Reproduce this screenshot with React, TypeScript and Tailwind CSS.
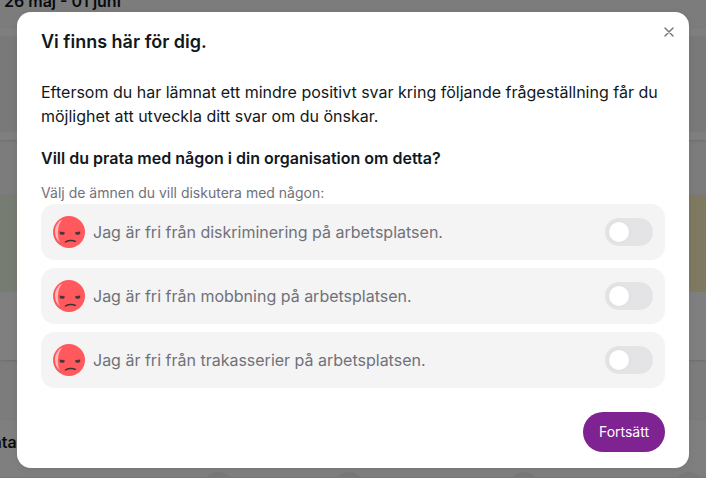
import { useState } from "react";

const topics = [
  "Jag är fri från diskriminering på arbetsplatsen.",
  "Jag är fri från mobbning på arbetsplatsen.",
  "Jag är fri från trakasserier på arbetsplatsen.",
];

const AngryFace: React.FC = () => (
  <svg width="32" height="32" viewBox="0 0 32 32" fill="none" className="shrink-0">
    <circle cx="16" cy="16" r="16" fill="#ff595e" />
    <path
      d="M9.200 3.600C4.900 5.900 2.100 10.400 2 15.800C2 20 3.700 23.800 6.800 26.200C5.200 22.400 4.500 18.500 5 14.200C5.400 10.200 6.800 6.700 9.200 3.600Z"
      fill="#ffb8ba"
    />
    <path
      d="M6.900 15.700Q9 16.500 11.400 16.300L11.200 17.900Q9 18.900 7.200 17.900ZM27 15.700Q24.900 16.500 22.500 16.300L22.700 17.900Q24.900 18.900 26.700 17.900Z"
      fill="#33363b"
      stroke="#33363b"
      strokeWidth="0.400"
    />
    <path
      d="M12.500 26C14.800 24.100 19.600 23.900 22.400 25.300"
      stroke="#33363b"
      strokeWidth="1.500"
      strokeLinecap="round"
    />
  </svg>
);

const Toggle: React.FC<{ label: string }> = ({ label }) => {
  const [on, setOn] = useState(false);

  return (
    <button
      role="switch"
      aria-checked={on}
      aria-label={label}
      onClick={() => setOn(!on)}
      className={`flex h-7 w-12 shrink-0 items-center rounded-full px-1 ${
        on ? "justify-end bg-[#7e2391]" : "justify-start bg-[#e4e4e7]"
      }`}
    >
      <span className="size-5 rounded-full bg-white shadow-[0_0_5px_rgba(0,0,0,0.04)]" />
    </button>
  );
};

const Backdrop: React.FC = () => (
  <div className="flex h-full flex-col bg-[#f8f8f8] text-base font-semibold text-[#11181c]">
    <div className="h-7 shrink-0 pl-1">
      <div className="-mt-[11px] leading-6">26 maj - 01 juni</div>
    </div>
    <div className="h-28 shrink-0 bg-white py-2 shadow-sm">
      <div className="h-24 bg-[#f3f3f3]" />
    </div>
    <div className="mt-[55px] flex h-[165px] shrink-0 flex-col bg-white shadow-sm">
      <div className="flex h-[97px] justify-between">
        <div className="w-1/2 bg-[#edf9e4]" />
        <div className="w-1/2 bg-[#fff3c2]" />
      </div>
    </div>
    <div className="mt-[60px] flex h-[58px] shrink-0 flex-col justify-between bg-white pt-2.5 shadow-sm">
      <div className="-ml-2 leading-6">nta</div>
      <div className="h-px bg-[#ededed]" />
    </div>
  </div>
);

const App: React.FC = () => (
  <div
    className="relative h-[478px] w-[706px] overflow-hidden"
    style={{ fontFamily: "Inter, sans-serif" }}
  >
    <Backdrop />
    <div className="absolute left-[202px] top-[472px] h-8 w-8 rounded-full bg-[#f0f0f0]" />
    <div className="absolute left-[333px] top-[472px] h-8 w-8 rounded-full bg-[#f0f0f0]" />
    <div className="absolute left-[508px] top-[472px] h-8 w-8 rounded-full bg-[#f0f0f0]" />
    <div className="absolute left-[673px] top-[472px] h-8 w-8 rounded-full bg-[#f0f0f0]" />

    <div className="absolute inset-0 flex items-start justify-center bg-black/50 pt-3">
      <section className="relative flex h-[456px] w-[672px] flex-col rounded-[14px] bg-white text-[#11181c] shadow-[0_0_5px_rgba(0,0,0,0.02),0_2px_10px_rgba(0,0,0,0.06)]">
        <button
          aria-label="Stäng"
          className="absolute right-1 top-1 flex size-8 items-center justify-center text-[#71717a]"
        >
          <svg width="16" height="16" viewBox="0 0 24 24" fill="none" stroke="currentColor" strokeWidth="2" strokeLinecap="round">
            <path d="M18 6L6 18M6 6l12 12" />
          </svg>
        </button>
        <header className="px-6 py-4 text-lg font-semibold">Vi finns här för dig.</header>
        <div className="flex flex-col px-6 pt-2">
          <p className="text-base">
            Eftersom du har lämnat ett mindre positivt svar kring följande frågeställning får du
            möjlighet att utveckla ditt svar om du önskar.
          </p>
          <h2 className="mt-[18px] text-base font-semibold">
            Vill du prata med någon i din organisation om detta?
          </h2>
          <p className="mt-[13px] text-sm text-[#71717a]">Välj de ämnen du vill diskutera med någon:</p>
          <div className="mt-px flex flex-col gap-2">
            {topics.map((topic) => (
              <div key={topic} className="flex h-14 items-center gap-2 rounded-[14px] bg-[#f4f4f4] px-3">
                <AngryFace />
                <span className="flex-1 text-base text-[#71717a]">{topic}</span>
                <Toggle label={topic} />
              </div>
            ))}
          </div>
        </div>
        <footer className="flex justify-end px-6 pt-6">
          <button className="h-10 w-[82px] rounded-full bg-[#7e2391] text-sm text-white">Fortsätt</button>
        </footer>
      </section>
    </div>
  </div>
);

export default App;
